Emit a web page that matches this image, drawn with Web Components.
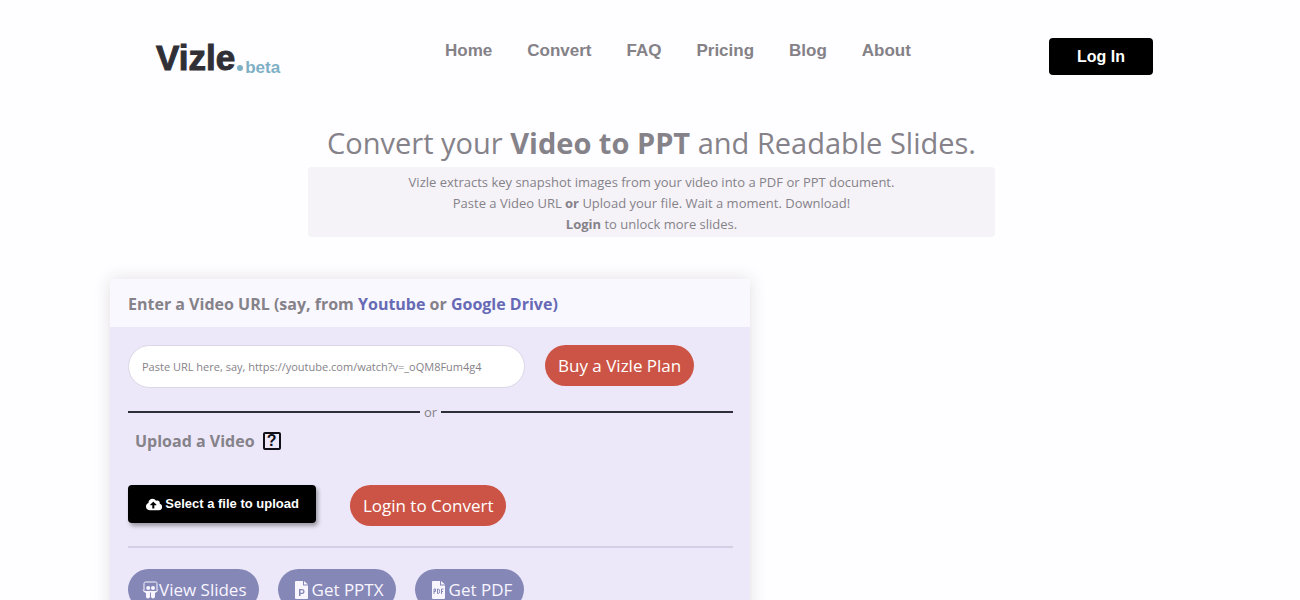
<!DOCTYPE html>
<html lang="en">
<head>
<meta charset="utf-8">
<meta name="viewport" content="width=device-width, initial-scale=1">
<title>Vizle</title>
<style>
    html, body {
        margin: 0;
        height: 100%;
    }
    body {
        overflow: hidden;
        background-color: #fefdff;
        color: #858289;
        font-family: "Open Sans", "Noto Sans", sans-serif;
    }
</style>
</head>
<body>
<vizle-page></vizle-page>

<script>
const ICONS = {
    upload: {
        box: '0 0 640 512',
        body: '<path d="M537.6 226.6c4.1-10.7 6.4-22.4 6.4-34.6 0-53-43-96-96-96-19.7 0-38.1 6-53.3 16.2C367 64.2 315.3 32 256 32c-88.4 0-160 71.6-160 160 0 2.7.1 5.4.2 8.1C40.2 219.8 0 273.2 0 336c0 79.5 64.5 144 144 144h368c70.7 0 128-57.3 128-128 0-61.9-44-113.6-102.4-125.4zM393.4 288H328v112c0 8.8-7.2 16-16 16h-48c-8.8 0-16-7.2-16-16V288h-65.4c-14.3 0-21.4-17.2-11.3-27.3l105.4-105.4c6.2-6.2 16.4-6.2 22.6 0l105.4 105.4c10.1 10.1 2.9 27.3-11.3 27.3z"/>'
    },
    slides: {
        box: '0 0 17 18',
        body: '<path d="M2 9V2.500Q2 1 3.500 1H13.500Q15 1 15 2.500V9" fill="none" stroke="currentColor"/><circle cx="6.200" cy="7" r="2"/><circle cx="11" cy="7" r="2"/><path d="M0.500 8.500C3 10.500 5.500 10 8.300 9.800C11.500 10 14 10.500 16.500 8.500C15.500 11 14 11.500 13 12V15.500C13 18 9.500 18 9 16V11.500H8V16C7.500 18 4 18 4 15.500V12C2.500 11.500 1 10.500 0.500 8.500Z"/>'
    },
    pptx: {
        box: '0 0 13 18',
        body: '<path fill-rule="evenodd" d="M1 0H8V4.500H13V17Q13 18 12 18H1Q0 18 0 17V1Q0 0 1 0ZM4 8V15H5.500V13H7A2.500 2.500 0 0 0 7 8ZM5.500 9.300H7A1.200 1.200 0 0 1 7 11.700H5.500Z"/><path d="M9 0L13 3.500H9Z"/>'
    },
    pdf: {
        box: '0 0 13 18',
        body: '<path d="M1 0H8V4.500H13V17Q13 18 12 18H1Q0 18 0 17V1Q0 0 1 0Z"/><path d="M9 0L13 3.500H9Z"/><path d="M2 13V8H3.500V10.500H2M5.500 8V12.500H6.500Q7.500 12.500 7.500 10.500T6.500 8ZM9.500 13V8H11.500M9.500 10.500H11" fill="none" stroke="#8587b7"/>'
    }
};

class VizleIcon extends HTMLElement {
    connectedCallback() {
        const icon = ICONS[this.getAttribute('name')];
        this.attachShadow({ mode: 'open' }).innerHTML = `
            <style>
                :host { display: inline-flex; flex: none; }
                svg { height: var(--icon-height, 18px); fill: currentColor; }
            </style>
            <svg viewBox="${icon.box}" aria-hidden="true">${icon.body}</svg>
        `;
    }
}

class VizleButton extends HTMLElement {
    connectedCallback() {
        const icon = this.getAttribute('icon');
        this.attachShadow({ mode: 'open' }).innerHTML = `
            ${this.getStyle()}
            <button type="button">
                ${icon ? `<vizle-icon name="${icon}"></vizle-icon>` : ''}
                <span><slot></slot></span>
            </button>
        `;
    }

    getStyle() {
        return `
            <style>
                :host { display: block; flex: none; }
                button {
                    display: flex;
                    align-items: center;
                    justify-content: center;
                    height: 41px;
                    padding: 0 13px;
                    border: 0;
                    border-radius: 21px;
                    background-color: #cc5446;
                    color: #fff;
                    font: 17px/24px "Open Sans", "Noto Sans", sans-serif;
                    white-space: nowrap;
                    cursor: pointer;
                }
                :host([kind="soft"]) button {
                    gap: var(--icon-gap, 4px);
                    padding: 0 12px 0 var(--icon-inset, 17px);
                    background-color: #8587b7;
                    color: #f8f5ff;
                }
                :host([kind="dark"]) button {
                    gap: 3px;
                    height: 38px;
                    padding: 0 17px 0 18px;
                    border-radius: 4px;
                    background-color: #000;
                    font: bold 13px/18px "Liberation Sans", Arial, sans-serif;
                    box-shadow: 2px 3px 4px rgba(0, 0, 0, 0.35);
                    --icon-height: 13px;
                }
                :host([kind="login"]) button {
                    height: 37px;
                    padding: 0 28px;
                    border-radius: 4px;
                    background-color: #000;
                    font: bold 16px/20px "Liberation Sans", Arial, sans-serif;
                }
            </style>
        `;
    }
}

class VizleHeader extends HTMLElement {
    connectedCallback() {
        const links = ['Home', 'Convert', 'FAQ', 'Pricing', 'Blog', 'About'];
        this.attachShadow({ mode: 'open' }).innerHTML = `
            <style>
                :host { display: block; }
                header {
                    display: grid;
                    grid-template-columns: minmax(auto, 298px) auto 1fr;
                    align-items: start;
                    max-width: 1006px;
                    margin: 0 auto;
                    padding-top: 38px;
                    box-sizing: border-box;
                }
                .logo {
                    display: flex;
                    align-items: baseline;
                    padding-left: 9px;
                    color: #302f36;
                    font: bold 35px/40px "Liberation Sans", Arial, sans-serif;
                    text-decoration: none;
                    -webkit-text-stroke: 1px currentColor;
                }
                .beta {
                    display: flex;
                    align-items: center;
                    gap: 2px;
                    align-self: end;
                    margin-left: 2px;
                    color: #7eb0c5;
                    font-size: 17px;
                    line-height: 20px;
                    -webkit-text-stroke: 0;
                }
                .beta::before {
                    content: "";
                    width: 6px;
                    height: 6px;
                    border-radius: 50%;
                    background-color: currentColor;
                }
                nav {
                    display: flex;
                    gap: 35px;
                    padding-top: 3px;
                }
                nav a {
                    color: #848187;
                    font: bold 17px/20px "Liberation Sans", Arial, sans-serif;
                    text-decoration: none;
                }
                vizle-button { justify-self: end; }
            </style>
            <header>
                <a class="logo" href="#">Vizle<span class="beta">beta</span></a>
                <nav>${links.map(link => `<a href="#">${link}</a>`).join('')}</nav>
                <vizle-button kind="login">Log In</vizle-button>
            </header>
        `;
    }
}

class VizleIntro extends HTMLElement {
    connectedCallback() {
        this.attachShadow({ mode: 'open' }).innerHTML = `
            <style>
                :host {
                    display: block;
                    max-width: 687px;
                    margin: 44px auto 0;
                    padding-left: 3px;
                    text-align: center;
                }
                h1 {
                    margin: 0 0 3px;
                    font-size: 29px;
                    font-weight: 400;
                    line-height: 42px;
                    white-space: nowrap;
                }
                p {
                    margin: 0;
                    padding: 5px 0 2px;
                    border-radius: 4px;
                    background-color: #f5f3f8;
                    font-size: 13px;
                    line-height: 21px;
                }
            </style>
            <h1>Convert your <b>Video to PPT</b> and Readable Slides.</h1>
            <p>
                Vizle extracts key snapshot images from your video into a PDF or PPT document.<br>
                Paste a Video URL <b>or</b> Upload your file. Wait a moment. Download!<br>
                <b>Login</b> to unlock more slides.
            </p>
        `;
    }
}

class VizleCard extends HTMLElement {
    connectedCallback() {
        this.attachShadow({ mode: 'open' }).innerHTML = `
            <style>
                :host {
                    display: block;
                    background-color: #ece8f9;
                    box-shadow: 0 0 16px rgba(50, 40, 60, 0.14);
                }
                header {
                    padding: 13px 18px 11px;
                    background-color: #faf8ff;
                }
                .body {
                    padding: 18px 17px 24px 18px;
                }
            </style>
            <header><slot name="title"></slot></header>
            <div class="body"><slot></slot></div>
        `;
    }
}

class ConvertForm extends HTMLElement {
    connectedCallback() {
        this.attachShadow({ mode: 'open' }).innerHTML = `
            ${this.getStyle()}
            <vizle-card>
                <h2 slot="title">
                    <label for="url">Enter a Video URL (say, from
                    <a href="#">Youtube</a> or <a href="#">Google Drive)</a></label>
                </h2>
                <div class="row url">
                    <input id="url" type="text" placeholder="Paste URL here, say, https://youtube.com/watch?v=_oQM8Fum4g4">
                    <vizle-button>Buy a Vizle Plan</vizle-button>
                </div>
                <div class="or">or</div>
                <h2 class="upload">Upload a Video <button class="help" type="button">?</button></h2>
                <div class="row file">
                    <vizle-button kind="dark" icon="upload">Select a file to upload</vizle-button>
                    <vizle-button>Login to Convert</vizle-button>
                </div>
                <hr>
                <div class="row results">
                    <vizle-button class="view" kind="soft" icon="slides">View Slides</vizle-button>
                    <vizle-button kind="soft" icon="pptx">Get PPTX</vizle-button>
                    <vizle-button kind="soft" icon="pdf">Get PDF</vizle-button>
                </div>
            </vizle-card>
        `;
    }

    getStyle() {
        return `
            <style>
                :host { display: block; }
                h2 {
                    margin: 0;
                    font-size: 16px;
                    font-weight: 700;
                    line-height: 24px;
                }
                a {
                    color: #666ab5;
                    text-decoration: none;
                }
                .row { display: flex; }
                .url { gap: 20px; }
                input {
                    flex: 0 1 397px;
                    min-width: 0;
                    height: 43px;
                    padding: 0 13px;
                    box-sizing: border-box;
                    border: 1px solid #dcd7e6;
                    border-radius: 22px;
                    background-color: #fff;
                    font: 11px/16px "Open Sans", "Noto Sans", sans-serif;
                }
                input::placeholder { color: #858289; }
                .or {
                    display: flex;
                    align-items: center;
                    gap: 4px;
                    margin-top: 14px;
                    font-size: 13px;
                    line-height: 20px;
                }
                .or::before, .or::after {
                    content: "";
                    flex: 1;
                    height: 2px;
                    background-color: #2e2e3a;
                }
                .upload {
                    display: flex;
                    align-items: center;
                    gap: 8px;
                    margin-top: 7px;
                    padding-left: 7px;
                }
                .help {
                    width: 18px;
                    height: 18px;
                    padding: 0;
                    border: 2px solid #101018;
                    border-radius: 2px;
                    background: none;
                    color: #101018;
                    font: bold 16px/14px "Liberation Sans", Arial, sans-serif;
                }
                .file {
                    gap: 34px;
                    margin-top: 32px;
                }
                hr {
                    height: 2px;
                    margin: 20px 0 21px;
                    border: 0;
                    background-color: #d4cfe4;
                }
                .results { gap: 19px; }
                .view {
                    --icon-gap: 0;
                    --icon-inset: 14px;
                }
            </style>
        `;
    }
}

class VizlePage extends HTMLElement {
    connectedCallback() {
        this.attachShadow({ mode: 'open' }).innerHTML = `
            <style>
                :host { display: block; }
                main {
                    display: grid;
                    grid-template-columns: minmax(0, 640px) 1fr;
                    max-width: 1080px;
                    margin: 42px auto 0;
                }
            </style>
            <vizle-header></vizle-header>
            <vizle-intro></vizle-intro>
            <main><convert-form></convert-form></main>
        `;
    }
}

customElements.define('vizle-icon', VizleIcon);
customElements.define('vizle-button', VizleButton);
customElements.define('vizle-header', VizleHeader);
customElements.define('vizle-intro', VizleIntro);
customElements.define('vizle-card', VizleCard);
customElements.define('convert-form', ConvertForm);
customElements.define('vizle-page', VizlePage);
</script>
</body>
</html>
